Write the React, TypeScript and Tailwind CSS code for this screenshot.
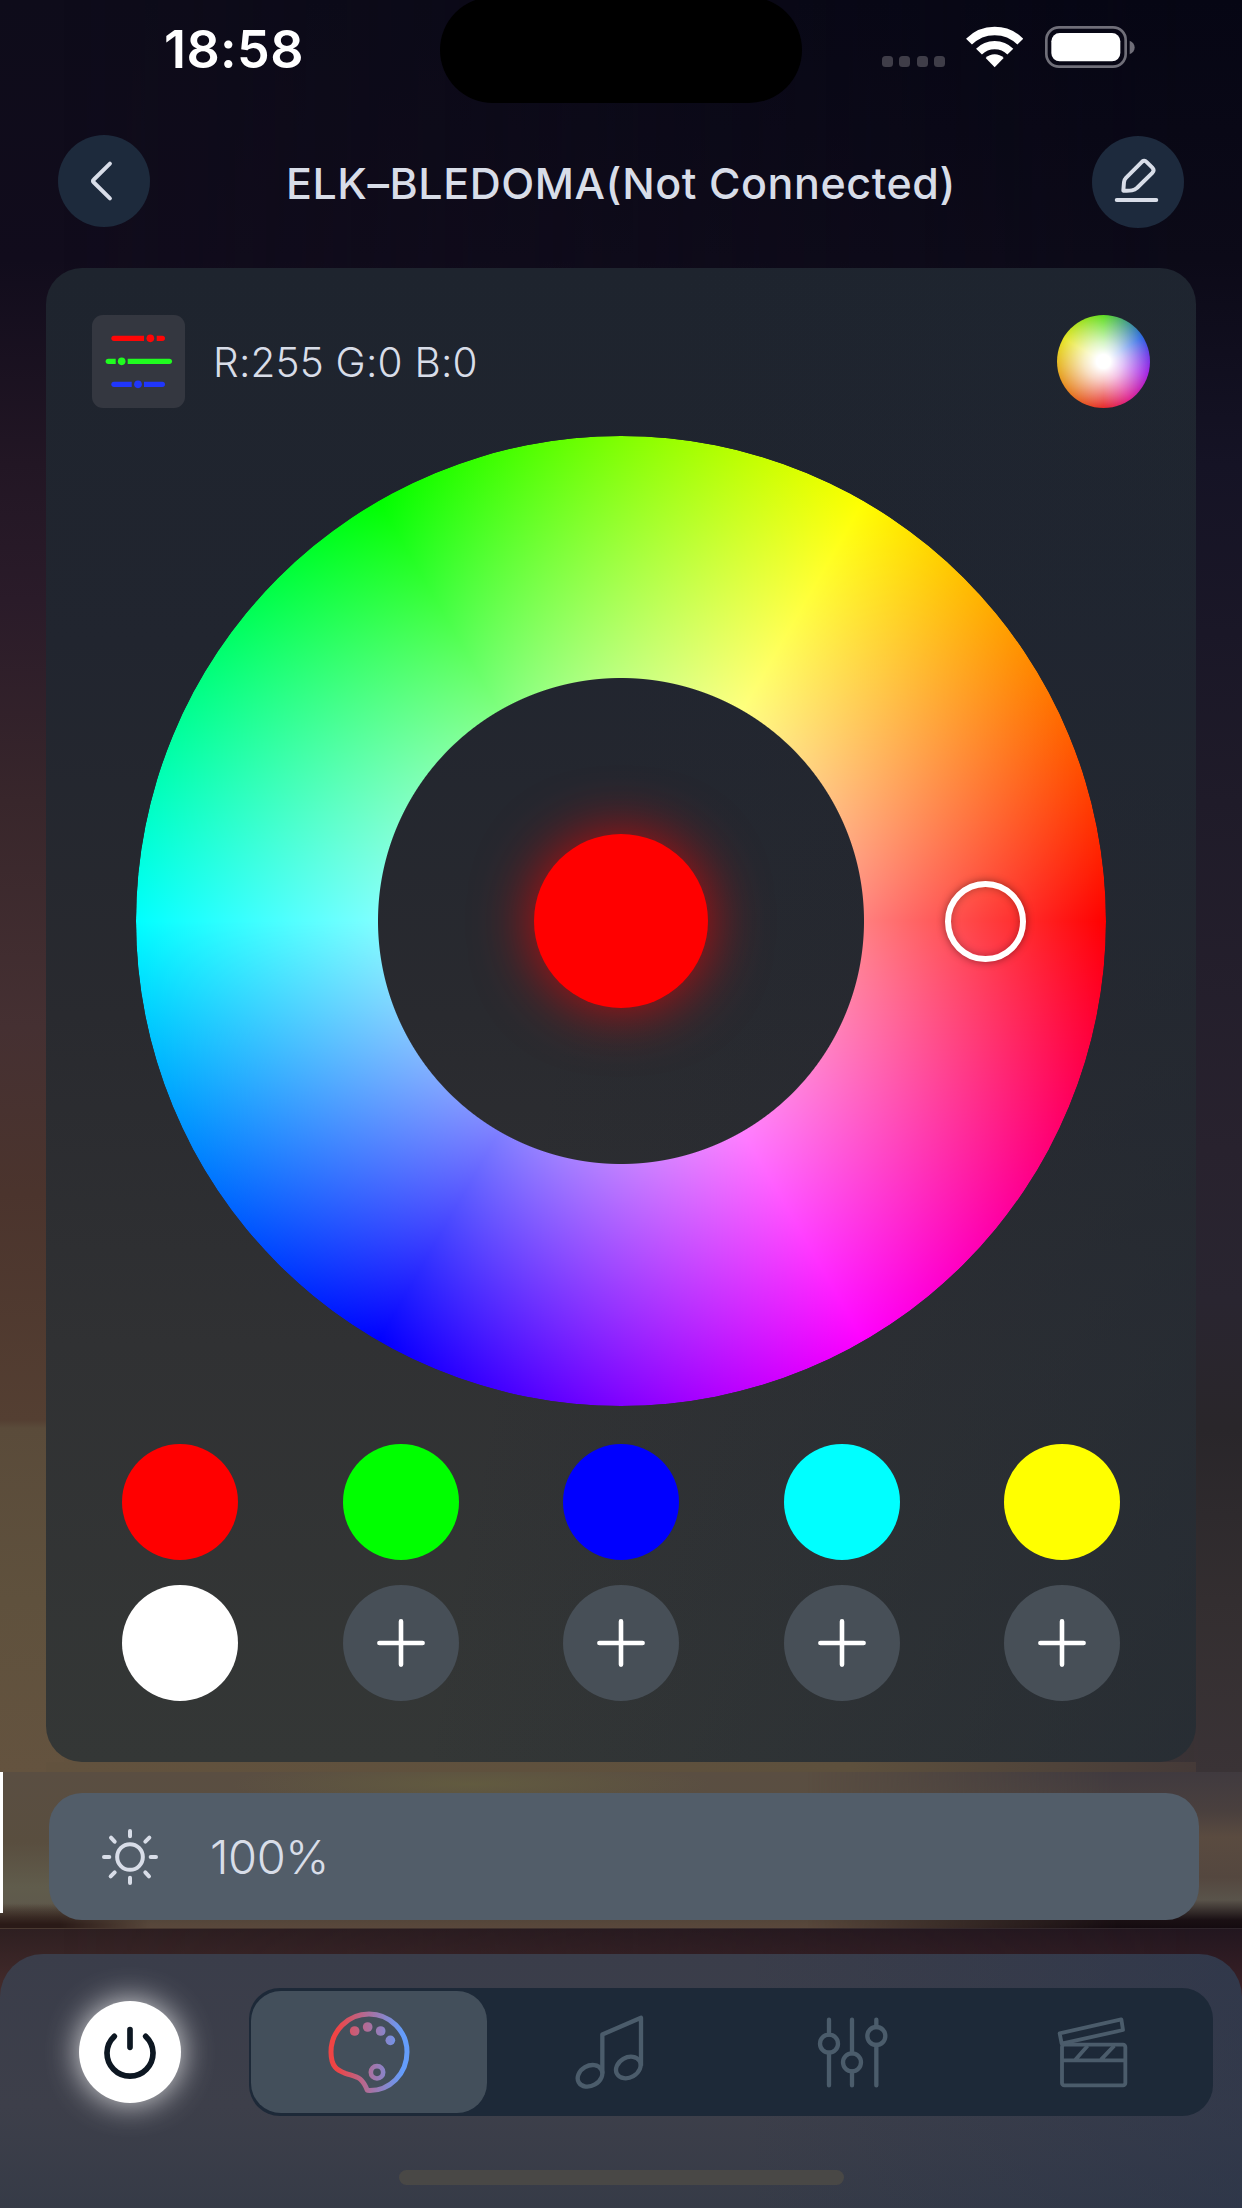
import { ReactNode } from 'react'
import clsx from 'clsx'

const swatches = [
  'bg-[#ff0000]',
  'bg-[#00ff00]',
  'bg-[#0000ff]',
  'bg-[#00ffff]',
  'bg-[#ffff00]',
  'bg-white',
  null,
  null,
  null,
  null,
]

function Background() {
  return (
    <div className="absolute inset-0">
      <div className="absolute inset-0 bg-[linear-gradient(180deg,#0e0c1a_0px,#110c1c_260px,#221624_464px,#2a1b29_600px,#38262b_801px,#453032_1026px,#4b342d_1194px,#543f32_1420px,#5a4b3a_1428px,#5f513d_1600px,#64533f_1772px,#64533f_1928px,#2e1f21_1929px,#442b2b_1990px,#4a332e_2208px)]" />
      <div className="absolute inset-0 bg-[linear-gradient(180deg,#060614_0px,#0c0a18_260px,#151325_464px,#1f1b29_801px,#28222e_1150px,#292530_1300px,#29262a_1430px,#332e30_1600px,#3a3336_1772px,#3a3336_1928px,#22161f_1929px,#3a2026_1990px,#2a2030_2208px)] [mask-image:linear-gradient(90deg,transparent_5%,#000_97%)]" />
      <div className="absolute top-[1762px] left-[46px] h-[10px] w-[1150px] bg-[linear-gradient(90deg,#62523e,#5d503d_70%,#453a38)]" />
      <div className="absolute top-[1772px] left-0 h-[156px] w-full bg-[linear-gradient(180deg,#5a4e42_0px,#594e3f_70px,#605c4c_115px,#5f5a4c_130px,#54463a_148px,#5a483c_156px)]" />
      <div className="absolute top-[1772px] left-0 h-[156px] w-full bg-[linear-gradient(180deg,#403a3f_0px,#4a403e_40px,#5a4b40_65px,#54473f_105px,#59534a_128px,#1a1014_148px,#140b10_156px)] [mask-image:linear-gradient(90deg,transparent_65%,#000_90%)]" />
      <div className="absolute top-[1760px] left-[230px] h-[48px] w-[480px] bg-[radial-gradient(closest-side,#65603f,transparent)] opacity-70 [clip-path:inset(12px_0_0_0)]" />
      <div className="absolute top-[1904px] left-0 h-[24px] w-[150px] bg-[linear-gradient(180deg,transparent,#2a1a17_85%)] [mask-image:linear-gradient(90deg,#000_40%,transparent)]" />
      <div className="absolute top-[1772px] left-0 h-[141px] w-[3px] bg-white" />
    </div>
  )
}

function StatusBar() {
  return (
    <div className="relative flex h-[103px] items-start justify-between pr-[107px] pl-[164px]">
      <span className="mt-[18px] text-[52px] leading-[64px] font-semibold tracking-[0.4px] text-white">18:58</span>
      <div className="absolute top-[-3px] left-[440px] h-[106px] w-[362px] rounded-full bg-black" />
      <div className="mt-[26px] flex items-start">
        <div className="mt-[30px] mr-[21px] flex gap-[6.3px]">
          {[0, 1, 2, 3].map((n) => (
            <span key={n} className="h-[11px] w-[11px] rounded-[3.5px] bg-[#3f3d48]" />
          ))}
        </div>
        <svg className="mr-[22px] h-[42px] w-[57px]" viewBox="0 0 171 126" fill="none" stroke="#fff" strokeWidth="25">
          <path d="M9 47A108.5 108.5 0 0 1 163 47" />
          <path d="M39 77A66.5 66.5 0 0 1 133 77" />
          <path d="M59 96A38 38 0 0 1 113 96L86 124Z" fill="#fff" stroke="none" />
        </svg>
        <svg className="h-[42px] w-[90px]" viewBox="0 0 270 126" fill="none">
          <rect x="4" y="4" width="238" height="118" rx="38" stroke="#706f79" strokeWidth="8" />
          <rect x="19" y="21" width="207" height="85" rx="25" fill="#fff" />
          <path d="M254 44C274 52 274 76 254 85Z" fill="#706f79" />
        </svg>
      </div>
    </div>
  )
}

function Header() {
  return (
    <header className="flex h-[165px] items-start justify-between pt-[32px] pr-[58px] pl-[58px]">
      <button className="flex h-[92px] w-[92px] items-center justify-center rounded-full bg-[#1d2a3c]">
        <svg className="h-[92px] w-[92px]" viewBox="0 0 93 93" fill="none" stroke="#d8dde8" strokeWidth="4" strokeLinecap="round" strokeLinejoin="round">
          <path d="M52.5 29L36 45.2Q34.6 46.5 36 47.8L52.5 64" />
        </svg>
      </button>
      <h1 className="mt-[16px] text-[43px] leading-[64px] font-medium tracking-[0.55px] whitespace-nowrap text-[#d8dde8]">
        ELK–BLEDOMA(Not Connected)
      </h1>
      <button className="mt-px flex h-[92px] w-[92px] items-center justify-center rounded-full bg-[#1d2a3d]">
        <svg className="h-[92px] w-[92px]" viewBox="0 0 279 279" fill="none" stroke="#d8dde8" strokeWidth="12" strokeLinecap="round" strokeLinejoin="round">
          <path d="M75 194H195" />
          <path d="M95 166L97 140Q98 132 103 127L150 80Q158 71 166 79L183 96Q191 104 183 112L137 157Q130 163 121 165Q112 167 95 166Z" />
        </svg>
      </button>
    </header>
  )
}

function RgbTile() {
  return (
    <div className="h-[93px] w-[93px] rounded-[11px] bg-[#343740]">
      <svg className="h-[93px] w-[93px]" viewBox="0 0 279 279">
        <g fill="#ff0606">
          <path d="M66 62H156V78H66A8 8 0 0 1 66 62Z" />
          <circle cx="175" cy="70" r="11.5" />
          <path d="M194 62H211A8 8 0 0 1 211 78H194Z" />
        </g>
        <g fill="#20fc20">
          <path d="M49 131H71V147H49A8 8 0 0 1 49 131Z" />
          <circle cx="89" cy="139" r="11.5" />
          <path d="M107 131H232A8 8 0 0 1 232 147H107Z" />
        </g>
        <g fill="#2036fc">
          <path d="M66 200H119V216H66A8 8 0 0 1 66 200Z" />
          <circle cx="138" cy="208" r="11.5" />
          <path d="M156 200H211A8 8 0 0 1 211 216H156Z" />
        </g>
      </svg>
    </div>
  )
}

function ColorWheel() {
  return (
    <div className="relative mx-auto mt-[28px] h-[970px] w-[970px]">
      <div className="h-full w-full rounded-full bg-[radial-gradient(closest-side,#fff,rgba(255,255,255,0)),conic-gradient(from_90deg,#f00,#f0f,#00f,#0ff,#0f0,#ff0,#f00)] [mask-image:radial-gradient(circle,transparent_242.5px,#000_243.5px)]" />
      <div className="absolute top-[398px] left-[398px] h-[174px] w-[174px] rounded-full bg-[#ff0000] shadow-[0_0_60px_rgba(255,0,0,0.75)]" />
      <div className="absolute top-[445px] left-[809px] h-[81px] w-[81px] rounded-full border-[6px] border-white shadow-[0_0_9px_rgba(0,0,0,0.45),inset_0_0_9px_rgba(0,0,0,0.3)]" />
    </div>
  )
}

function ColorPanel() {
  return (
    <section className="mx-[46px] h-[1494px] rounded-[36px] bg-[linear-gradient(100deg,transparent_45%,rgba(30,38,50,0.55)_100%),linear-gradient(180deg,#1e242e_0%,#21252f_25%,#292a2f_50%,#303133_72%,#343736_100%)] pt-[47px]">
      <div className="flex items-center pr-[46px] pl-[46px]">
        <RgbTile />
        <span className="mt-[3px] ml-[28px] text-[40.5px] leading-[50px] font-[350] tracking-[0.2px] text-[#d8dde8]">
          R:255 G:0 B:0
        </span>
        <div className="ml-auto h-[93px] w-[93px] rounded-full bg-[radial-gradient(closest-side,#fff_15%,rgba(255,255,255,0.72)_42%,rgba(255,255,255,0)_100%),conic-gradient(#5fdd22_0deg,#2b66e2_58deg,#6f3ae8_82deg,#a322e2_106deg,#dd2290_145deg,#e52a2a_180deg,#e67a22_225deg,#e6b022_262deg,#e6e422_300deg,#5fdd22_360deg)]" />
      </div>
      <ColorWheel />
      <div className="mt-[38px] grid grid-cols-5 gap-x-[104.5px] gap-y-[25px] pr-[76px] pl-[76px]">
        {swatches.map((color, i) => (
          <div
            key={i}
            className={clsx('flex h-[116px] w-[116px] items-center justify-center rounded-full', color ?? 'bg-[#474f57]')}
          >
            {!color && (
              <svg className="h-[48px] w-[48px]" viewBox="0 0 48 48" stroke="#fff" strokeWidth="4.6" strokeLinecap="round">
                <path d="M24 2.4V45.6M2.4 24H45.6" />
              </svg>
            )}
          </div>
        ))}
      </div>
    </section>
  )
}

function BrightnessBar() {
  return (
    <div className="mt-[31px] mr-[43px] ml-[49px] flex h-[127px] items-center rounded-[33px] bg-[#525d69] pl-[52px]">
      <svg className="h-[58px] w-[58px]" viewBox="-87 -87 174 174" fill="none" stroke="#d8dde8" strokeWidth="12" strokeLinecap="round">
        <circle r="38.5" />
        <path d="M0-62V-78M0 62V78M-62 0H-78M62 0H78M-46-46L-57-58M46-46L58-58M-46 46L-58 58M46 46L57 58" />
      </svg>
      <span className="ml-[51px] text-[47px] leading-[60px] font-[350] tracking-[-0.4px] text-[#d8dde8]">100%</span>
    </div>
  )
}

function PaletteIcon() {
  return (
    <svg className="h-[82px] w-[82px]" viewBox="0 0 246 246" fill="none">
      <defs>
        <linearGradient id="palette" gradientUnits="userSpaceOnUse" x1="15" y1="0" x2="235" y2="0">
          <stop offset="0.05" stopColor="#ef4444" />
          <stop offset="0.95" stopColor="#649dfb" />
        </linearGradient>
      </defs>
      <path
        d="M118 238C186 242 237 187 237 123A114 114 0 0 0 9 123C9 168 28 178 52 187C88 199 101 196 118 238Z"
        stroke="url(#palette)"
        strokeWidth="15"
        strokeLinejoin="round"
      />
      <g fill="url(#palette)">
        <circle cx="80" cy="60" r="14.5" />
        <circle cx="119" cy="48" r="14.5" />
        <circle cx="158" cy="60" r="14.5" />
        <circle cx="187" cy="88" r="14.5" />
      </g>
      <circle cx="147" cy="184" r="18.5" stroke="url(#palette)" strokeWidth="14" />
    </svg>
  )
}

function MusicIcon() {
  return (
    <svg className="mr-[4px] h-[75px] w-[69px]" viewBox="0 0 207 224" fill="none" stroke="#4b5c6b" strokeWidth="13" strokeLinejoin="round">
      <ellipse cx="45" cy="182" rx="39" ry="30" transform="rotate(-30 45 182)" />
      <ellipse cx="160" cy="157" rx="39" ry="30" transform="rotate(-30 160 157)" />
      <path d="M82 175V58L198 8V152" />
    </svg>
  )
}

function MixerIcon() {
  return (
    <svg className="h-[71px] w-[71px]" viewBox="0 0 213 213" fill="none" stroke="#4b5c6b" strokeWidth="13" strokeLinecap="round">
      <path d="M36 8V53M36 107V205M105 8V109M105 163V205M178 8V30M178 84V205" />
      <circle cx="36" cy="80" r="27" />
      <circle cx="105" cy="136" r="27" />
      <circle cx="178" cy="57" r="27" />
    </svg>
  )
}

function ClapperIcon() {
  return (
    <svg className="h-[71px] w-[71px]" viewBox="0 0 213 213" fill="none" stroke="#4b5c6b" strokeWidth="11.5" strokeLinejoin="round">
      <rect x="15" y="83" width="190" height="122" rx="7" />
      <path d="M15 130H205M92 86L55 128M172 86L132 128" />
      <path d="M8 49L193 7L198 39L14 80Z" />
    </svg>
  )
}

function Tab({ active, children }: { active?: boolean; children: ReactNode }) {
  return (
    <button className="flex h-[122px] w-[240.7px]">
      <span
        className={clsx(
          'flex h-full items-center justify-center rounded-[30px]',
          active ? 'w-[236px] bg-[#434f5b]' : 'w-full',
        )}
      >
        {children}
      </span>
    </button>
  )
}

function BottomBar() {
  return (
    <footer className="mt-[34px] flex h-[254px] flex-col rounded-t-[43px] bg-[linear-gradient(90deg,transparent_60%,rgba(38,50,75,0.45)_100%),linear-gradient(180deg,#3a3d4a_0%,#3d3f4a_60%,#363b47_100%)]">
      <div className="flex items-center pt-[34px] pl-[79px]">
        <button className="flex h-[102px] w-[102px] items-center justify-center rounded-full bg-white shadow-[0_0_32px_rgba(255,255,255,0.85)]">
          <svg className="h-[102px] w-[102px]" viewBox="-153 -153 306 306" fill="none" stroke="#0d1722" strokeWidth="17" strokeLinecap="round">
            <path d="M0-67V-14M-47-47A69 69 0 1 0 47-47" />
          </svg>
        </button>
        <nav className="ml-[68px] flex h-[128px] w-[964px] items-center rounded-[31px] bg-[#1d2938] pl-[2px]">
          <Tab active>
            <PaletteIcon />
          </Tab>
          <Tab>
            <MusicIcon />
          </Tab>
          <Tab>
            <MixerIcon />
          </Tab>
          <Tab>
            <ClapperIcon />
          </Tab>
        </nav>
      </div>
      <div className="mx-auto mt-[54px] h-[15px] w-[445px] rounded-full bg-[#494846]" />
    </footer>
  )
}

export default function App() {
  return (
    <div className="relative h-[2208px] w-[1242px] overflow-hidden bg-[#0c0a18] font-['Inter',sans-serif]">
      <Background />
      <div className="relative flex h-full flex-col">
        <StatusBar />
        <Header />
        <ColorPanel />
        <BrightnessBar />
        <BottomBar />
      </div>
    </div>
  )
}
